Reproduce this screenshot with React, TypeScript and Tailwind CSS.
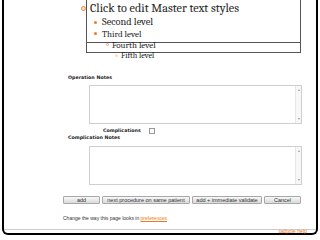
const NoteBox = () => (
  <div className="w-[213px] h-[39px] border border-[#cfcfcf] bg-white flex justify-end">
    <div className="w-[6px] h-full border-l border-[#e6e6e6] bg-[#f7f7f7] flex flex-col justify-between items-center py-[3px]">
      <div className="w-0 h-0 border-x-[1.5px] border-x-transparent border-b-[2px] border-b-[#9a9a9a]" />
      <div className="w-0 h-0 border-x-[1.5px] border-x-transparent border-t-[2px] border-t-[#9a9a9a]" />
    </div>
  </div>
);

const Btn = ({ label, w }: { label: string; w: string }) => (
  <button
    className={`${w} h-[8px] border border-[#a8a8a8] rounded-[1px] bg-gradient-to-b from-[#f8f8f8] to-[#dadada] text-[5.5px] leading-[6px] text-[#333] flex items-center justify-center`}
  >
    {label}
  </button>
);

export default function App() {
  return (
    <div className="w-[320px] h-[240px] bg-white relative overflow-hidden font-['Liberation_Sans',Arial,sans-serif]">
      <div className="ml-[2px] w-[316px] h-[235px] border-x-2 border-b-2 border-black rounded-b-[6px]">
        <div className="pt-[75px] pl-[64px] font-['DejaVu_Sans','Verdana',sans-serif] font-bold text-[4.75px] leading-[6px] text-[#222]">
          <div>Operation Notes</div>
          <div className="mt-[4px] ml-[21px]">
            <NoteBox />
          </div>
          <div className="mt-[4px] ml-[35px] h-[6px] flex items-center">
            <span>Complications</span>
            <span className="ml-[8px] w-[6px] h-[6px] border border-[#9a9a9a] bg-[#fbfbfb]" />
          </div>
          <div className="mt-[1px]">Complication Notes</div>
          <div className="mt-[5px] ml-[21px]">
            <NoteBox />
          </div>
        </div>

        <div className="mt-[11px] pl-[59px] flex gap-[2px]">
          <Btn label="add" w="w-[37px]" />
          <Btn label="next procedure on same patient" w="w-[88px]" />
          <Btn label="add + immediate validate" w="w-[70px]" />
          <Btn label="Cancel" w="w-[37px]" />
        </div>

        <div className="mt-[11px] h-[6px] pl-[59px] text-[5px] leading-[6px] text-[#333]">
          Change the way this page looks in{" "}
          <span className="text-[#f07a22] underline">preferences</span>
        </div>

        <div className="mt-[8px] border-t border-[#cccccc] pr-[9px] h-[4px] text-right text-[5.2px] leading-[3px] text-[#f07a22]">
          tadpole help
        </div>
      </div>

      {/* master text overlay */}
      <div className="absolute left-[86px] top-[-1px] w-[215px] h-[54px] border border-[#555]" />
      <div className="absolute left-[86px] top-[42px] w-[215px] border-t border-[#555]" />

      <div className="absolute left-0 top-0 font-serif text-[#1e1e1e]">
        <div className="mt-[1.4px] h-[14px] pl-[81px] flex items-center text-[12.2px] leading-[14px] whitespace-nowrap">
          <span className="w-[5px] h-[5px] rounded-full border-[1.5px] border-[#f08a3c] bg-[#fde3cc]" />
          <span className="ml-[4px]">Click to edit Master text styles</span>
        </div>
        <div className="mt-[0.8px] h-[12px] pl-[94px] flex items-center text-[10.3px] leading-[12px] whitespace-nowrap">
          <span className="w-[3px] h-[3px] rounded-full bg-[#f07a2a]" />
          <span className="ml-[5px]">Second level</span>
        </div>
        <div className="mt-[0.5px] h-[10px] pl-[94px] flex items-center text-[9px] leading-[10px] whitespace-nowrap">
          <span className="w-[3px] h-[3px] rounded-full bg-[#f07a2a]" />
          <span className="ml-[5px]">Third level</span>
        </div>
        <div className="mt-[1px] h-[10px] pl-[106px] flex items-center text-[9px] leading-[10px] whitespace-nowrap">
          <span className="w-[3px] h-[3px] rounded-full border border-[#f0a070]" />
          <span className="ml-[3px]">Fourth level</span>
        </div>
        <div className="mt-[1.3px] h-[9px] pl-[115px] flex items-center text-[8.2px] leading-[9px] whitespace-nowrap">
          <span className="w-[3px] h-[3px] rounded-full bg-[#f8dcd0]" />
          <span className="ml-[3px]">Fifth level</span>
        </div>
      </div>
    </div>
  );
}
